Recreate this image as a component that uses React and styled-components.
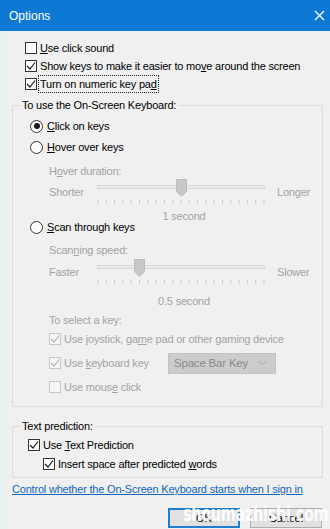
import React from "react";
import styled, { createGlobalStyle } from "styled-components";

const GlobalStyle = createGlobalStyle`
  html, body {
    margin: 0;
    padding: 0;
    background: #f0f0f0;
  }
  body {
    font-family: "Liberation Sans", Arial, sans-serif;
    font-size: 11px;
    letter-spacing: -0.2px;
    color: #000;
  }
`;

const Window = styled.div`
  position: relative;
  width: 330px;
  height: 529px;
  overflow: hidden;
  display: flex;
  flex-direction: column;
  background: #f0f0f0;
  box-shadow: inset 2px 0 0 #e2f3f7;
`;

const TitleBar = styled.div`
  height: 31px;
  flex: none;
  display: flex;
  align-items: center;
  justify-content: space-between;
  padding: 0 5px 0 9px;
  background: #0e79d4;
  color: #fff;
  font-size: 12px;
  letter-spacing: 0;
`;

const CloseIcon = () => (
  <svg width="11" height="11" viewBox="0 0 11 11">
    <path d="M1 1 L10 10 M10 1 L1 10" stroke="#fff" strokeWidth="1.3" />
  </svg>
);

const TopList = styled.div`
  display: flex;
  flex-direction: column;
  margin-top: 8px;
  padding-left: 25px;
`;

const Row = styled.div`
  display: flex;
  align-items: center;
  gap: 3px;
  height: ${(p) => p.$h || 18}px;
  margin-top: ${(p) => p.$mt || 0}px;
  padding-left: ${(p) => p.$indent || 0}px;
  color: ${(p) => (p.$disabled ? "#a3a3a3" : "#000")};
  white-space: nowrap;
`;

const Text = styled.span`
  display: inline-block;
  width: ${(p) => (p.$w ? `${p.$w}px` : "auto")};
  line-height: 14px;
  outline: ${(p) => (p.$focus ? "1px dotted #222" : "none")};
  outline-offset: 1px;
`;

const Box = styled.span`
  flex: none;
  box-sizing: border-box;
  width: 12px;
  height: 12px;
  display: flex;
  align-items: center;
  justify-content: center;
  border: 1px solid ${(p) => (p.$disabled ? "#c6c6c6" : "#333")};
  background: ${(p) => (p.$disabled ? "#f6f6f6" : "#fff")};
`;

const Circle = styled.span`
  flex: none;
  box-sizing: border-box;
  width: 13px;
  height: 13px;
  border-radius: 50%;
  display: flex;
  align-items: center;
  justify-content: center;
  border: 1px solid #333;
  background: #fff;
  margin-right: 1px;
`;

const Dot = styled.span`
  width: 6px;
  height: 6px;
  border-radius: 50%;
  background: #1a1a1a;
`;

const CheckBox = ({ checked, disabled }) => (
  <Box $disabled={disabled}>
    {checked && (
      <svg width="10" height="10" viewBox="0 0 10 10">
        <path
          d="M1 5 L4 8 L9 1.5"
          fill="none"
          stroke={disabled ? "#b4b4b4" : "#1a1a1a"}
          strokeWidth="1.2"
        />
      </svg>
    )}
  </Box>
);

const Radio = ({ checked }) => <Circle>{checked && <Dot />}</Circle>;

const Group = styled.fieldset`
  margin: ${(p) => p.$mt || 0}px 7px 0 12px;
  padding: 0;
  border: 1px solid #dcdcdc;
  min-width: 0;
`;

const Legend = styled.legend`
  margin-left: 7px;
  padding: 0 2px;
  height: 14px;
  line-height: 14px;
`;

const GroupBody = styled.div`
  display: flex;
  flex-direction: column;
  padding: 0 0 ${(p) => p.$pb || 0}px ${(p) => p.$pl || 0}px;
`;

const Sub = styled.div`
  display: flex;
  flex-direction: column;
  padding-left: 19px;
  color: #a3a3a3;
`;

const Label = styled.div`
  height: ${(p) => p.$h || 14}px;
  line-height: ${(p) => p.$h || 14}px;
  margin-top: ${(p) => p.$mt || 0}px;
  white-space: nowrap;
`;

const Caption = styled(Label)`
  width: 270px;
  text-align: center;
`;

const SliderRow = styled.div`
  display: grid;
  grid-template-columns: 48px 168px auto;
  height: 26px;
  margin-top: ${(p) => p.$mt || 0}px;
`;

const SliderText = styled.span`
  margin-top: 7px;
  margin-left: ${(p) => p.$ml || 0}px;
  line-height: 14px;
  white-space: nowrap;
`;

const TrackArea = styled.div`
  position: relative;
`;

const Track = styled.div`
  box-sizing: border-box;
  height: 4px;
  margin-top: 7px;
  border: 1px solid #d9d9d9;
  background: #e9e9e9;
`;

const Thumb = styled.svg`
  position: absolute;
  top: 1px;
`;

const Ticks = styled.svg`
  position: absolute;
  top: 22px;
  left: 0;
`;

const Slider = ({ value, left, right, mt }) => (
  <SliderRow $mt={mt}>
    <SliderText>{left}</SliderText>
    <TrackArea>
      <Track />
      <Ticks width="168" height="4" viewBox="0 0 168 4">
        {Array.from({ length: 21 }, (_, i) => (
          <line
            key={i}
            x1={1 + i * 8.3}
            x2={1 + i * 8.3}
            y1="0"
            y2="4"
            stroke="#c9c9c9"
            strokeWidth="1"
          />
        ))}
      </Ticks>
      <Thumb
        width="11"
        height="18"
        viewBox="0 0 11 18"
        style={{ left: `calc(${value * 100}% - 5px)` }}
      >
        <path
          d="M0.5 0.5 H10.5 V12.5 L5.5 17.3 L0.5 12.5 Z"
          fill="#c8c8c8"
          stroke="#bdbdbd"
        />
      </Thumb>
    </TrackArea>
    <SliderText $ml={12}>{right}</SliderText>
  </SliderRow>
);

const Select = styled.div`
  box-sizing: border-box;
  width: 108px;
  height: 21px;
  display: flex;
  align-items: center;
  justify-content: space-between;
  padding: 0 8px 0 5px;
  background: #cccccc;
  border: 1px solid #c3c3c3;
  color: #8a8a8a;
  font-size: 11.5px;
`;

const Link = styled.a`
  margin: 4px 0 0 12px;
  height: 14px;
  line-height: 14px;
  color: #1066c2;
  text-decoration: underline;
  white-space: nowrap;
`;

const ButtonBar = styled.div`
  display: flex;
  justify-content: flex-end;
  gap: 10px;
  margin-top: 12px;
  padding-right: 8px;
`;

const Button = styled.button`
  box-sizing: border-box;
  width: 72px;
  height: 20px;
  padding: 0;
  font: inherit;
  background: #e1e1e1;
  color: #000;
  border: ${(p) => (p.$default ? "2px solid #1f7fcf" : "1px solid #adadad")};
`;

const Watermark = styled.span`
  position: absolute;
  left: 183px;
  top: 502px;
  font-family: "DejaVu Sans", "Liberation Sans", sans-serif;
  font-weight: bold;
  font-size: 21px;
  line-height: 24px;
  letter-spacing: -0.5px;
  color: rgba(255, 255, 255, 0.93);
  transform-origin: left top;
  transform: scaleX(0.69);
  white-space: nowrap;
`;

const U = styled.u`
  text-decoration-thickness: 1px;
`;

const App = () => (
  <Window>
    <GlobalStyle />
    <TitleBar>
      <span>Options</span>
      <CloseIcon />
    </TitleBar>

    <TopList>
      <Row>
        <CheckBox />
        <Text>
          <U>U</U>se click sound
        </Text>
      </Row>
      <Row>
        <CheckBox checked />
        <Text>
          Show keys to make it easier to mo<U>v</U>e around the screen
        </Text>
      </Row>
      <Row>
        <CheckBox checked />
        <Text $focus>
          Turn on numeric key pa<U>d</U>
        </Text>
      </Row>
    </TopList>

    <Group $mt={5}>
      <Legend>To use the On-Screen Keyboard:</Legend>
      <GroupBody $pb={10} $pl={17}>
        <Row $mt={5}>
          <Radio checked />
          <Text>
            <U>C</U>lick on keys
          </Text>
        </Row>
        <Row $mt={3}>
          <Radio />
          <Text>
            <U>H</U>over over keys
          </Text>
        </Row>
        <Sub>
          <Label $mt={8}>
            H<U>o</U>ver duration:
          </Label>
          <Slider value={0.5} left="Shorter" right="Longer" />
          <Caption $mt={7} $h={10}>
            1 second
          </Caption>
        </Sub>
        <Row $h={12}>
          <Radio />
          <Text>
            <U>S</U>can through keys
          </Text>
        </Row>
        <Sub>
          <Label $mt={10}>
            Scan<U>n</U>ing speed:
          </Label>
          <Slider value={0.25} left="Faster" right="Slower" mt={1} />
          <Caption $mt={10}>0.5 second</Caption>
          <Label $mt={5}>To select a key:</Label>
          <Row $mt={3} $disabled>
            <CheckBox checked disabled />
            <Text>
              Use joystick, ga<U>m</U>e pad or other gaming device
            </Text>
          </Row>
          <Row $mt={3} $h={24} $disabled>
            <CheckBox checked disabled />
            <Text $w={101}>
              Use <U>k</U>eyboard key
            </Text>
            <Select>
              <span>Space Bar Key</span>
              <svg width="9" height="6" viewBox="0 0 9 6">
                <path
                  d="M0.5 0.8 L4.5 4.8 L8.5 0.8"
                  fill="none"
                  stroke="#a9a9a9"
                />
              </svg>
            </Select>
          </Row>
          <Row $mt={3} $disabled>
            <CheckBox disabled />
            <Text>
              Use mous<U>e</U> click
            </Text>
          </Row>
        </Sub>
      </GroupBody>
    </Group>

    <Group $mt={12}>
      <Legend>Text prediction:</Legend>
      <GroupBody $pb={4} $pl={15}>
        <Row $mt={3}>
          <CheckBox checked />
          <Text>
            Use <U>T</U>ext Prediction
          </Text>
        </Row>
        <Row $mt={1} $indent={15}>
          <CheckBox checked />
          <Text>
            Insert space after predicted <U>w</U>ords
          </Text>
        </Row>
      </GroupBody>
    </Group>

    <Link href="#">
      Control whether the On-Screen Keyboard starts when I sign in
    </Link>

    <ButtonBar>
      <Button $default>OK</Button>
      <Button>Cancel</Button>
    </ButtonBar>

    <Watermark>shoumazhishi.com</Watermark>
  </Window>
);

export default App;
